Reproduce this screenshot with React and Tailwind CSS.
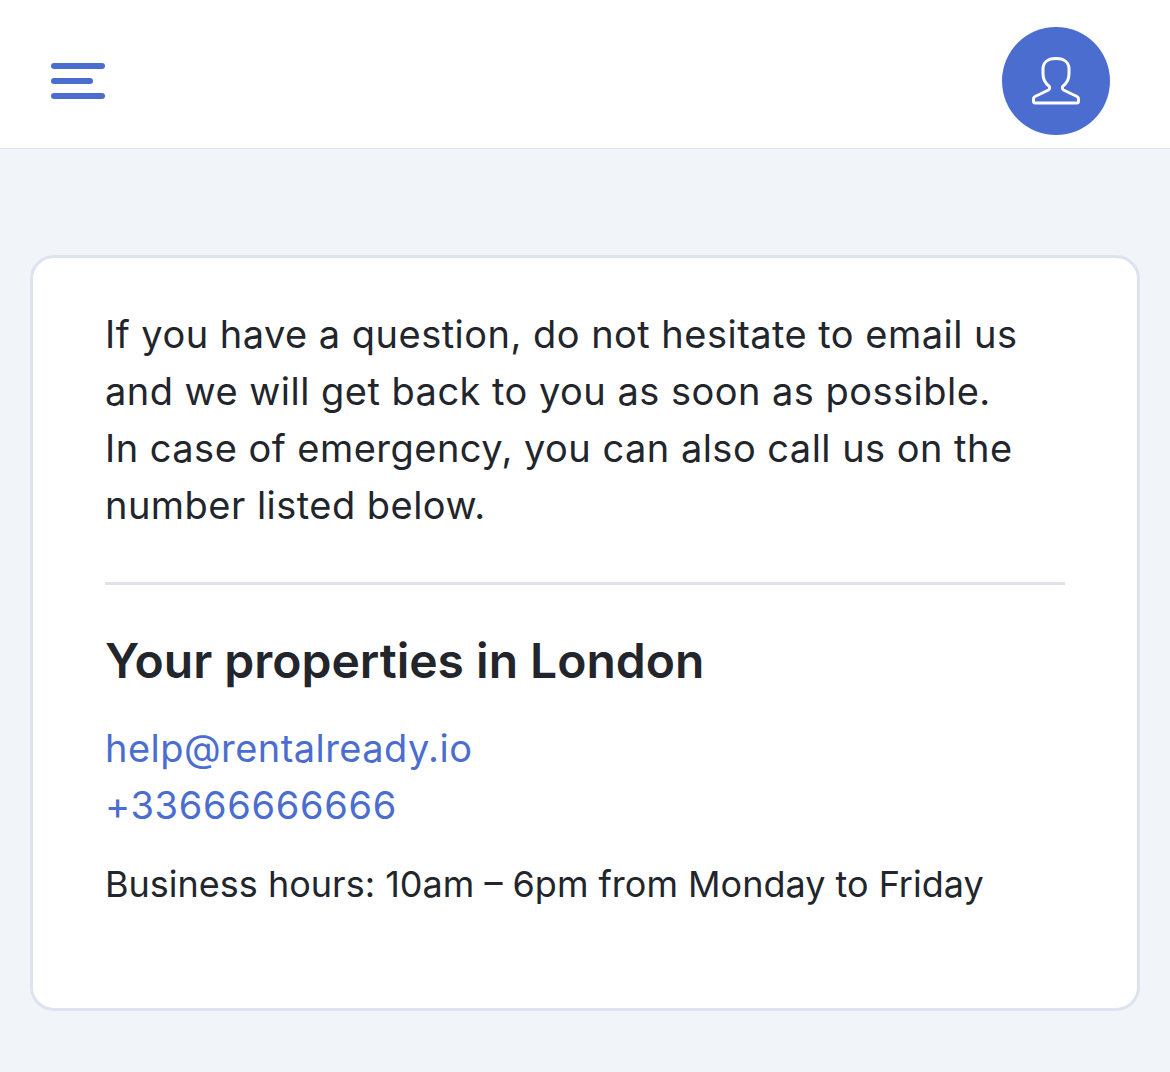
// Contact page with header and help card
export default function App() {
  return (
    <div className="min-h-[1072px] bg-[#f1f4f9] font-['Inter',sans-serif] text-[#22262c]">
      {/* top bar */}
      <header className="flex h-[149px] items-start justify-between border-b border-[#dfe2ea] bg-white pl-[51px] pr-[60px] pt-[27px]">
        <button className="mt-[36px] flex w-[54px] flex-col gap-[9px]">
          <span className="h-[6px] w-full rounded-full bg-[#4c6dd0]" />
          <span className="h-[6px] w-[42px] rounded-full bg-[#4c6dd0]" />
          <span className="h-[6px] w-full rounded-full bg-[#4c6dd0]" />
        </button>
        <div className="flex h-[108px] w-[108px] items-center justify-center rounded-full bg-[#4c6dd0]">
          <svg width="50" height="50" viewBox="0 0 50 50" fill="none" stroke="white" strokeWidth="3" strokeLinejoin="round">
            <path d="M25 2.5C16 2.5 12 7 12 13V18C12 23 14 27 18 30C19 31 19 33 17.5 34L4 40.5C3 41 2.5 42 2.5 43V45C2.5 46.5 3.5 47 4.5 47H45.5C46.5 47 47.5 46.5 47.5 45V43C47.5 42 47 41 46 40.5L32.5 34C31 33 31 31 32 30C36 27 38 23 38 18V13C38 7 34 2.5 25 2.5Z" />
          </svg>
        </div>
      </header>

      {/* card */}
      <main className="px-[30px] pt-[106px]">
        <div className="h-[756px] rounded-[24px] border-[3px] border-[#dde3ef] bg-white px-[72px] pt-[48px]">
          <p className="text-[38px] leading-[57px] tracking-[0.47px]">
            If you have a question, do not hesitate to email us and we will get back to you as soon as possible.
            <br />
            In case of emergency, you can also call us on the number listed below.
          </p>
          <hr className="mt-[48px] border-t-[3px] border-[#dfe2ea]" />
          <h2 className="mt-[44px] text-[48px] leading-[64px] font-semibold">Your properties in London</h2>
          <div className="mt-[27px] text-[38px] leading-[57px] tracking-[0.45px] text-[#4c6dd0]">
            <div>help@rentalready.io</div>
            <div className="tracking-[0.7px]">+33666666666</div>
          </div>
          <p className="mt-[26px] text-[36px] leading-[48px]">Business hours: 10am – 6pm from Monday to Friday</p>
        </div>
      </main>
    </div>
  );
}
